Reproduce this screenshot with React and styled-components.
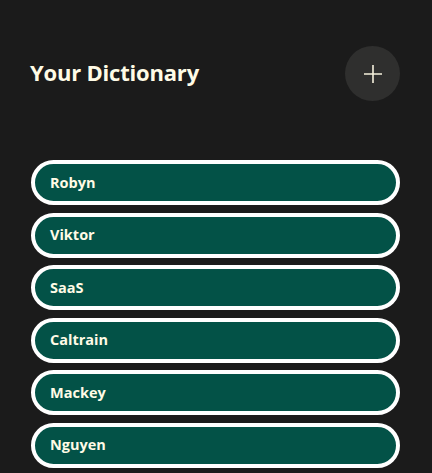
import React from 'react'
import styled, { createGlobalStyle } from 'styled-components'

const words = ['Robyn', 'Viktor', 'SaaS', 'Caltrain', 'Mackey', 'Nguyen']

const GlobalStyle = createGlobalStyle`
  html, body {
    margin: 0;
    padding: 0;
    background: #1b1b1b;
    font-family: "Open Sans", "Noto Sans", sans-serif;
  }
`

const App = () => {
  return (
    <Page>
      <GlobalStyle />
      <Header>
        <Title>Your Dictionary</Title>
        <AddButton aria-label='Add word'>
          <svg width='20' height='20' viewBox='0 0 20 20'>
            <path d='M10 1 V19 M1 10 H19' stroke='#f5f1dc' strokeWidth='1.6' />
          </svg>
        </AddButton>
      </Header>
      <List>
        {words.map((w) => (
          <Word key={w}>{w}</Word>
        ))}
      </List>
    </Page>
  )
}

export default App

const Page = styled.div`
  padding: 46px 32px 0 31px;
  height: 473px;
  box-sizing: border-box;
  overflow: hidden;
`
const Header = styled.div`
  display: flex;
  align-items: center;
  justify-content: space-between;
`
const Title = styled.h1`
  margin: 0 0 4px -1px;
  font-size: 22px;
  font-weight: 700;
  color: #fffbe6;
  letter-spacing: -0.2px;
`
const AddButton = styled.button`
  width: 55px;
  height: 55px;
  border-radius: 50%;
  border: none;
  background: #2f2f2e;
  display: flex;
  align-items: center;
  justify-content: center;
  padding: 0;
  cursor: pointer;
`
const List = styled.div`
  display: flex;
  flex-direction: column;
  gap: 7.6px;
  margin-top: 59px;
`
const Word = styled.div`
  height: 45px;
  box-sizing: border-box;
  border: 4px solid #ffffff;
  border-radius: 23px;
  background: #035247;
  display: flex;
  align-items: center;
  padding: 0 0 1px 15px;
  font-size: 14.5px;
  font-weight: 700;
  color: #fffbe6;
`
